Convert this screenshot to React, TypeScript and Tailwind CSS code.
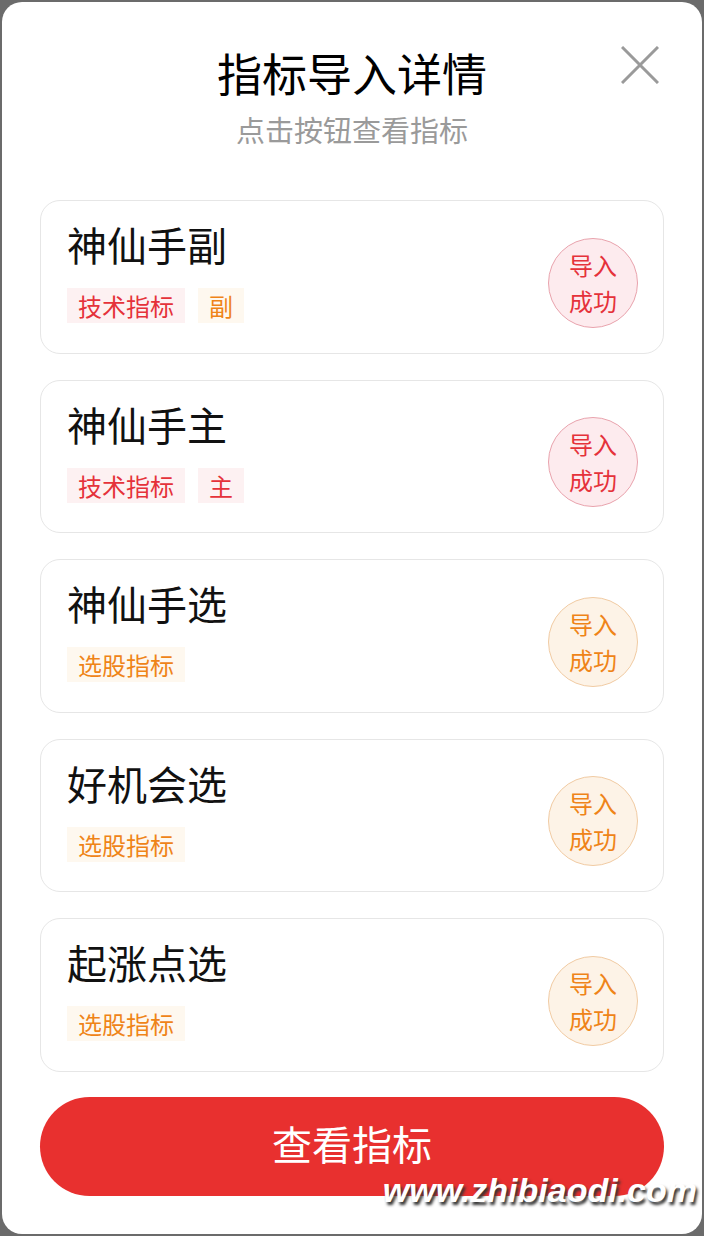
const items = [
  { name: '神仙手副', tags: [{ t: '技术指标', c: 'red' }, { t: '副', c: 'orange' }], c: 'red' },
  { name: '神仙手主', tags: [{ t: '技术指标', c: 'red' }, { t: '主', c: 'red' }], c: 'red' },
  { name: '神仙手选', tags: [{ t: '选股指标', c: 'orange' }], c: 'orange' },
  { name: '好机会选', tags: [{ t: '选股指标', c: 'orange' }], c: 'orange' },
  { name: '起涨点选', tags: [{ t: '选股指标', c: 'orange' }], c: 'orange' },
];

function Tag({ text, color }: { text: string; color: string }) {
  const cls =
    color === 'red' ? 'bg-[#fdf1f2] text-[#e5323a]' : 'bg-[#fef8ef] text-[#ef8418]';
  return <span className={`px-[11px] text-[24px] leading-[35px] ${cls}`}>{text}</span>;
}

function Badge({ color }: { color: string }) {
  const cls =
    color === 'red'
      ? 'border-[#e9a3ad] bg-[#fdebee] text-[#e5323a]'
      : 'border-[#f1cba3] bg-[#fdf3e7] text-[#ef8418]';
  return (
    <div
      className={`mt-[12px] w-[90px] h-[90px] rounded-full border flex flex-col items-center justify-center text-[24px] leading-[36px] ${cls}`}
    >
      <span>导入</span>
      <span>成功</span>
    </div>
  );
}

export default function App() {
  return (
    <div
      className="h-[1236px] bg-[#6b6b6b] p-[2px]"
      style={{ fontFamily: '"Noto Sans CJK SC", "Noto Sans", sans-serif' }}
    >
      <div className="relative h-full bg-white rounded-[20px] px-[38px]">
        <button className="absolute right-[42px] top-[43px] w-[40px] h-[40px] flex items-center justify-center">
          <svg width="38" height="38" viewBox="0 0 38 38">
            <path d="M1 1 L37 37 M37 1 L1 37" stroke="#9a9a9a" strokeWidth="3" />
          </svg>
        </button>
        <div className="pt-[45px] flex flex-col items-center">
          <h1 className="text-[45px] leading-[52px] text-black">指标导入详情</h1>
          <p className="mt-[10px] text-[29px] leading-[40px] text-[#9a9a9a]">点击按钮查看指标</p>
        </div>
        <div className="mt-[51px] flex flex-col gap-[26px]">
          {items.map((it) => (
            <div
              key={it.name}
              className="h-[153.5px] rounded-[20px] border border-[#e6e6e6] pl-[26px] pr-[25px] flex items-center justify-between"
            >
              <div className="mb-[10px] flex flex-col">
                <div className="text-[40px] leading-[48px] text-[#111]">{it.name}</div>
                <div className="mt-[20px] flex gap-[13px]">
                  {it.tags.map((t) => (
                    <Tag key={t.t} text={t.t} color={t.c} />
                  ))}
                </div>
              </div>
              <Badge color={it.c} />
            </div>
          ))}
        </div>
        <button className="mt-[25px] w-full h-[99px] pb-[7px] rounded-full bg-[#e8302f] text-white text-[40px]">
          查看指标
        </button>
        <div
          className="absolute right-[5px] bottom-[18px] italic text-white text-[34px] font-bold"
          style={{ fontFamily: '"Liberation Sans", sans-serif', textShadow: '2px 3px 3px #333' }}
        >
          www.zhibiaodi.com
        </div>
      </div>
    </div>
  );
}
